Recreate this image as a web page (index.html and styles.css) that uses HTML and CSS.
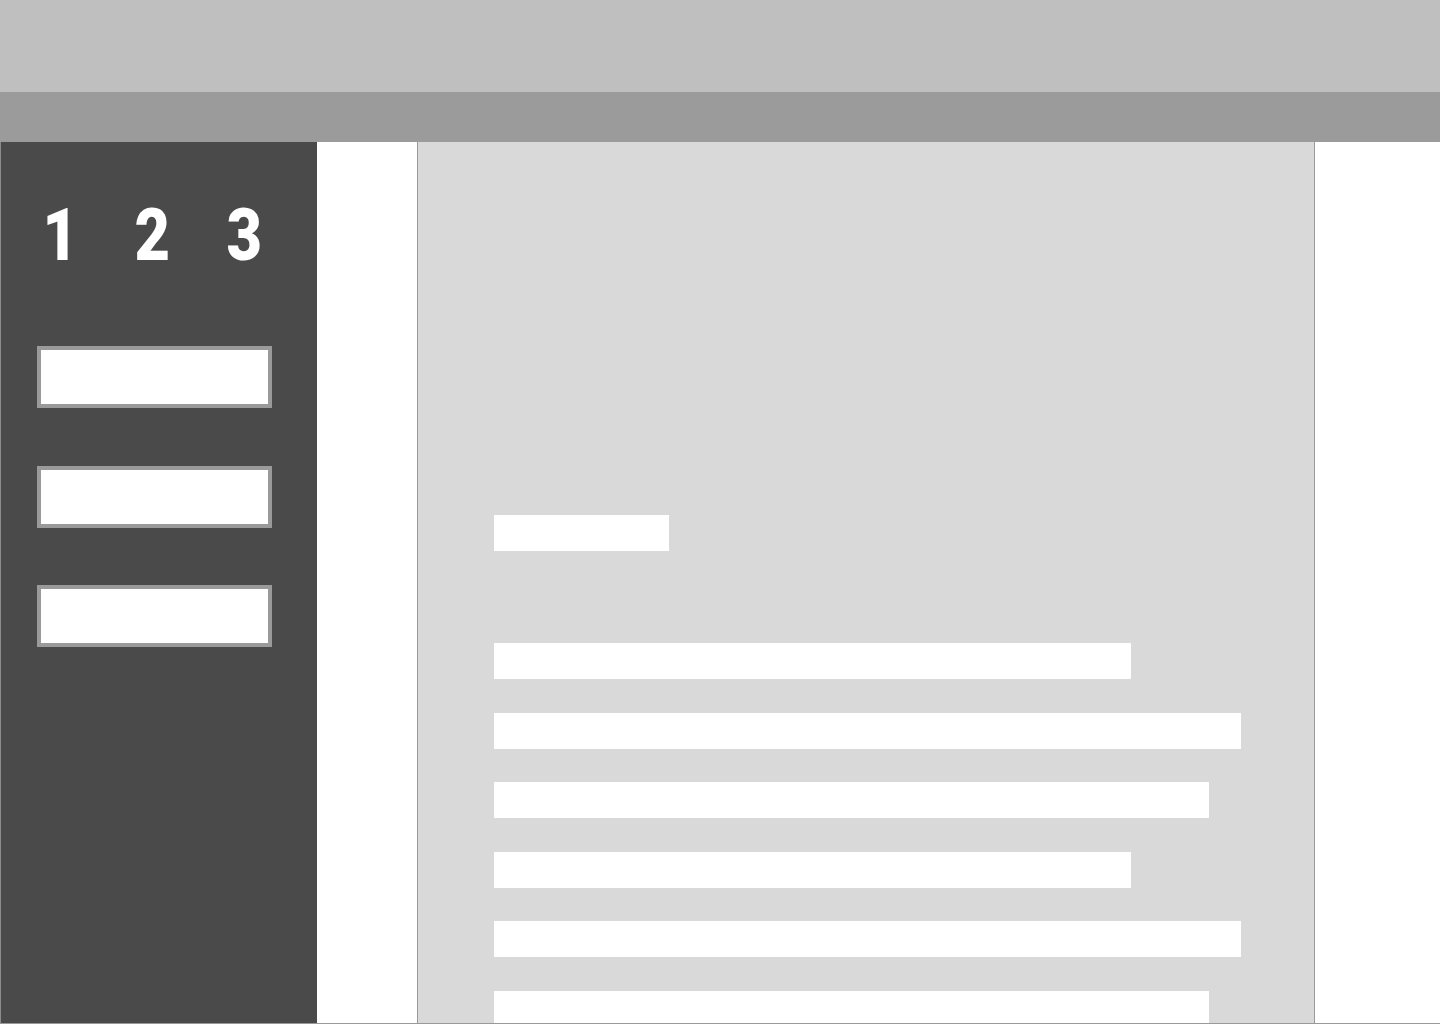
FILE: index.html
```
<!DOCTYPE html>
<html lang="en">
<head>
  <meta charset="UTF-8" />
  <meta name="viewport" content="width=device-width, initial-scale=1.0" />
  <title>Wireframe</title>
  <link rel="stylesheet" href="styles.css">
</head>
<body>

  <header class="topbar"></header>
  <nav class="navbar"></nav>

  <div class="layout">
    <aside class="sidebar">
      <div class="steps">
        <span>1</span>
        <span>2</span>
        <span>3</span>
      </div>
      <div class="fields">
        <input type="text" class="field" />
        <input type="text" class="field" />
        <input type="text" class="field" />
      </div>
    </aside>

    <main class="panel">
      <div class="bar title"></div>
      <div class="lines">
        <div class="bar short"></div>
        <div class="bar long"></div>
        <div class="bar mid"></div>
        <div class="bar short"></div>
        <div class="bar long"></div>
        <div class="bar mid"></div>
      </div>
    </main>
  </div>

</body>
</html>
```

FILE: styles.css
```
body {
  margin: 0;
  font-family: "Liberation Sans", Arial, sans-serif;
  background: #fff;
  height: 1024px;
  overflow: hidden;
}
.topbar {
  height: 92px;
  background: #bfbfbf;
}
.navbar {
  height: 50px;
  background: #9b9b9b;
}
.layout {
  display: flex;
  height: 881px;
  border-left: 1px solid #8c8c8c;
  border-bottom: 1px solid #999;
  overflow: hidden;
}
.sidebar {
  width: 316px;
  flex-shrink: 0;
  background: #4a4a4a;
  padding: 0 45px 0 36px;
  box-sizing: border-box;
}
.steps {
  display: flex;
  justify-content: space-between;
  padding: 56.5px 7px 0 2px;
  height: 146px;
  box-sizing: border-box;
  color: #fff;
  font-family: Roboto, "Liberation Sans", sans-serif;
  font-weight: 900;
  font-size: 73px;
  line-height: 73px;
}
.steps span {
  display: inline-block;
  transform: scaleX(0.84);
}
.fields {
  display: flex;
  flex-direction: column;
  gap: 57.5px;
  padding-top: 58px;
}
.field {
  display: block;
  width: 235px;
  height: 62px;
  margin: 0;
  padding: 0;
  box-sizing: border-box;
  border: 4px solid #9a9a9a;
  background: #fff;
  outline: none;
}
.panel {
  width: 898px;
  flex-shrink: 0;
  margin-left: 100px;
  box-sizing: border-box;
  background: #d9d9d9;
  border-left: 1px solid #999;
  border-right: 1px solid #999;
  padding: 373px 72px 0 76px;
}
.bar {
  background: #fff;
  height: 36px;
}
.title {
  width: 175px;
  margin-bottom: 92px;
}
.lines {
  display: flex;
  flex-direction: column;
  gap: 33.6px;
}
.short {
  width: 637px;
}
.long {
  width: 747px;
}
.mid {
  width: 715px;
}
```
